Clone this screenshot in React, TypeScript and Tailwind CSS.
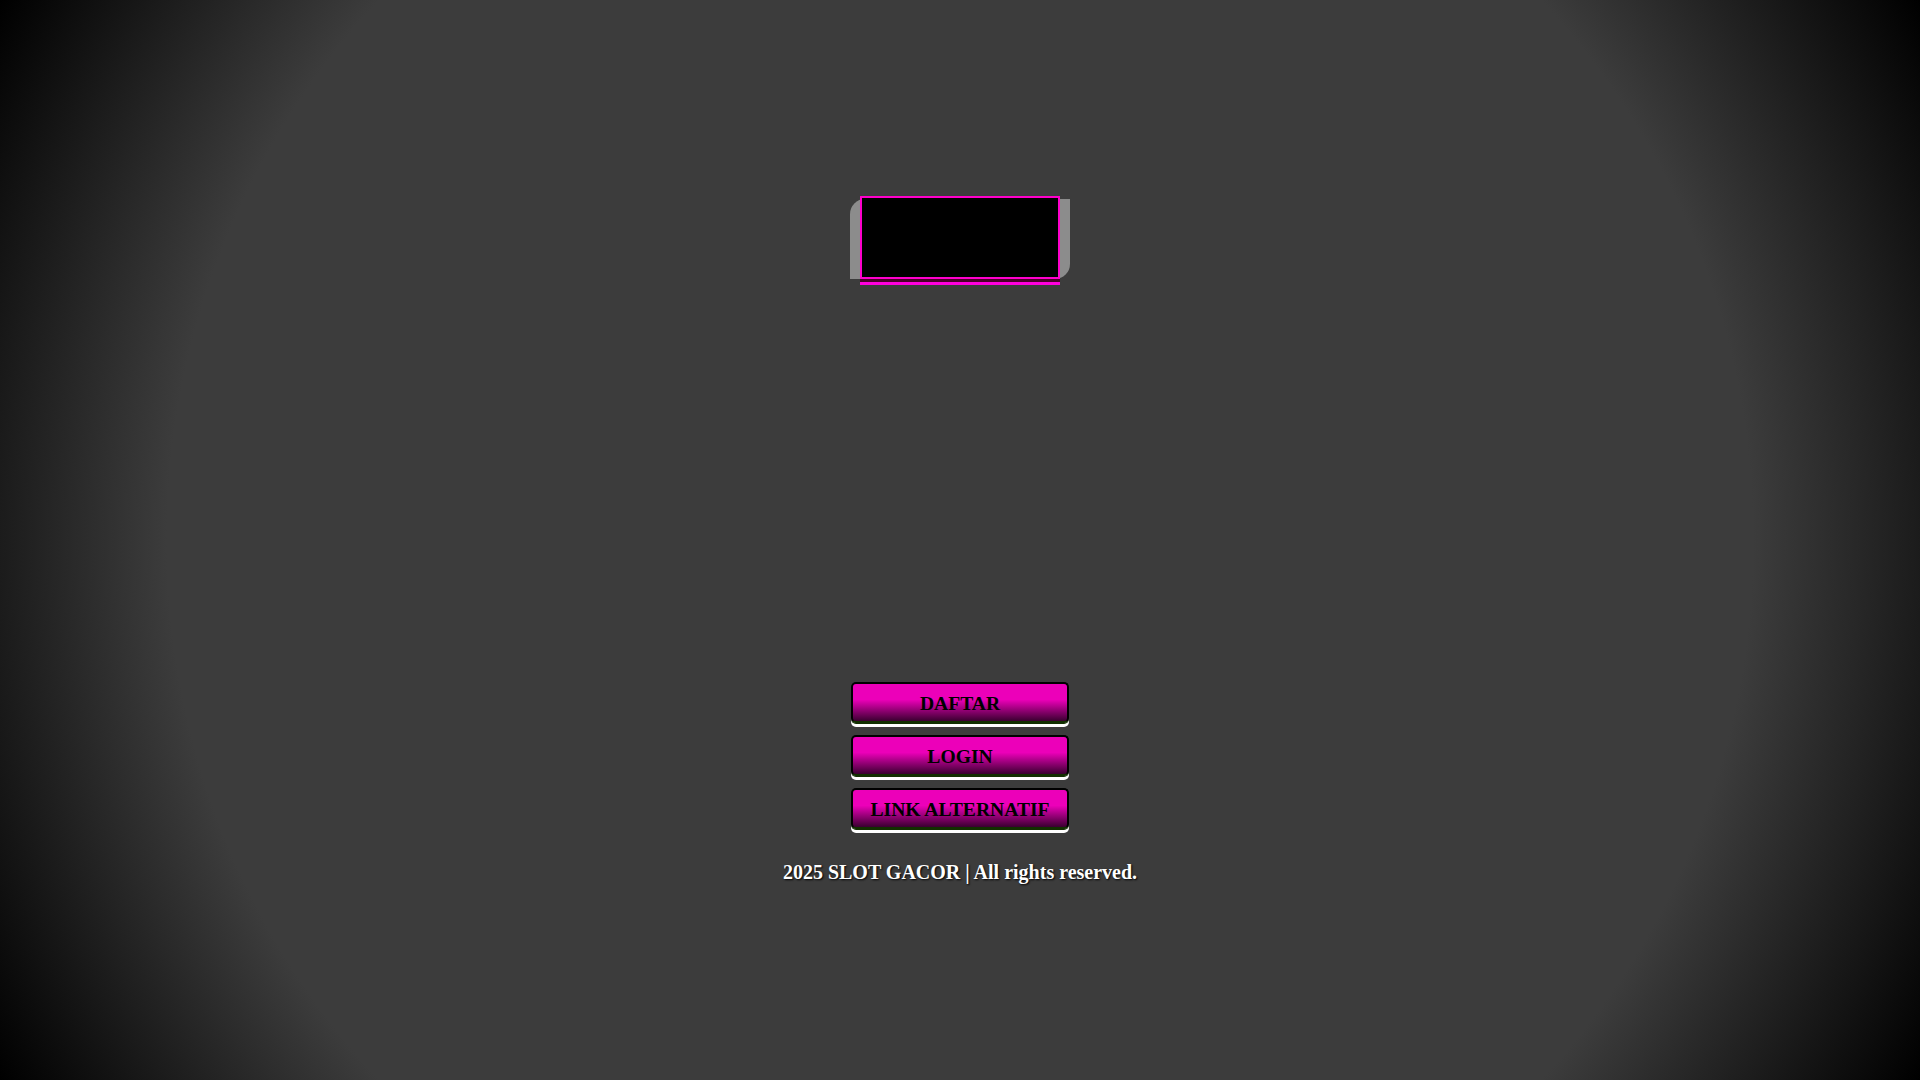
const links = ['DAFTAR', 'LOGIN', 'LINK ALTERNATIF'];

export default function App() {
  return (
    <div className="min-h-screen w-full bg-[radial-gradient(circle_at_center,#3c3c3c_72%,#000_100%)] font-['Liberation_Serif',serif]">
      <div className="flex flex-col items-center">
        {/* logo frame */}
        <div className="mt-[199px] h-[80px] w-[220px] rounded-tl-[15px] rounded-br-[15px] bg-[#8c8c8c] px-[10px]">
          <div className="-mt-[3px] h-[83px] w-[200px] border-2 border-[#ff00cc] bg-black shadow-[0_3px_0_#4a0028,0_6px_0_#ff00dd]" />
        </div>

        {/* buttons */}
        <div className="mt-[403px] flex flex-col gap-[12px]">
          {links.map((label) => (
            <a
              key={label}
              href="#"
              className="flex h-[41px] w-[218px] items-center justify-center rounded-[5px] border-2 border-[#000] border-b-[#123000] bg-[linear-gradient(to_bottom,#ec00b9_0%,#ec00b9_42%,#3a0030_100%)] pt-[2px] text-[19.6px] font-bold text-black shadow-[0_1px_0_#123000,0_4px_0_#fff]"
            >
              {label}
            </a>
          ))}
        </div>

        {/* footer */}
        <p className="mt-[32px] text-[20px] font-bold leading-[23px] text-white [text-shadow:1px_1px_2px_#000]">
          2025 SLOT GACOR | All rights reserved.
        </p>
      </div>
    </div>
  );
}
